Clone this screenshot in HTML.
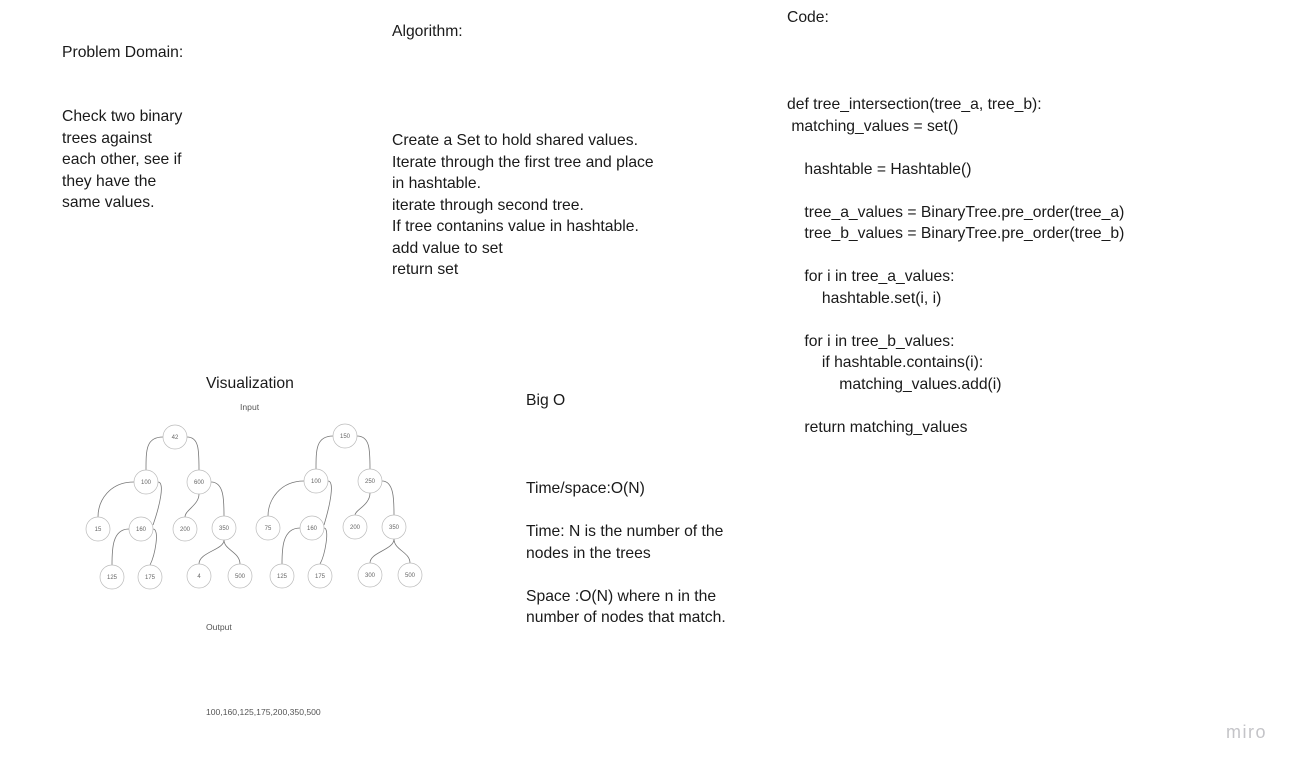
<html><head><style>
body{margin:0;width:1298px;height:770px;background:#fff;position:relative;overflow:hidden;font-family:"Liberation Sans",sans-serif;color:#1a1a1a}
.t{position:absolute;font-size:15.7px;line-height:21.5px;white-space:pre}
.s{position:absolute;font-size:8.6px;color:#555}
</style></head><body>
<div class="t" style="left:62px;top:42px">Problem Domain:</div>
<div class="t" style="left:62px;top:106px">Check two binary
trees against
each other, see if
they have the
same values.</div>
<div class="t" style="left:392px;top:21px">Algorithm:</div>
<div class="t" style="left:392px;top:130px">Create a Set to hold shared values.
Iterate through the first tree and place
in hashtable.
iterate through second tree.
If tree contanins value in hashtable.
add value to set
return set</div>
<div class="t" style="left:787px;top:7px">Code:</div>
<div class="t" style="left:787px;top:94px">def tree_intersection(tree_a, tree_b):
 matching_values = set()

    hashtable = Hashtable()

    tree_a_values = BinaryTree.pre_order(tree_a)
    tree_b_values = BinaryTree.pre_order(tree_b)

    for i in tree_a_values:
        hashtable.set(i, i)

    for i in tree_b_values:
        if hashtable.contains(i):
            matching_values.add(i)

    return matching_values</div>
<div class="t" style="left:206px;top:373px">Visualization</div>
<div class="s" style="left:240px;top:402px">Input</div>
<div class="s" style="left:206px;top:622px">Output</div>
<div class="s" style="left:206px;top:707px">100,160,125,175,200,350,500</div>
<div class="t" style="left:526px;top:390px">Big O</div>
<div class="t" style="left:526px;top:478px">Time/space:O(N)

Time: N is the number of the
nodes in the trees

Space :O(N) where n in the
number of nodes that match.</div>
<div style="position:absolute;left:1226px;top:722px;font-size:18px;color:#c4c4c8;letter-spacing:1.5px">miro</div>
<svg style="position:absolute;left:0;top:0" width="1298" height="770" font-family="Liberation Sans" font-size="6" fill="none" stroke="#888" stroke-width="0.8">
<g stroke="#777">
<path d="M163 437 C146 437 146 450 146 470"/><path d="M187 437 C199 437 199 450 199 470"/>
<path d="M134 482 C110 482 98 500 98 517"/><path d="M158 482 C165 482 160 505 153 525"/>
<path d="M199 494 C199 505 185 510 185 517"/><path d="M211 482 C224 482 224 500 224 516"/>
<path d="M129 529 C112 529 112 550 112 565"/><path d="M153 529 C160 529 155 555 150 565"/>
<path d="M224 540 C224 550 199 552 199 564"/><path d="M224 540 C224 550 240 552 240 564"/>
<path d="M333 436 C316 436 316 450 316 469"/><path d="M357 436 C370 436 370 450 370 469"/>
<path d="M304 481 C280 481 268 500 268 516"/><path d="M328 481 C335 481 330 505 324 525"/>
<path d="M370 493 C370 505 355 510 355 515"/><path d="M382 481 C394 481 394 500 394 515"/>
<path d="M300 528 C282 528 282 550 282 564"/><path d="M324 528 C330 528 325 555 320 564"/>
<path d="M394 539 C394 550 370 552 370 563"/><path d="M394 539 C394 550 410 552 410 563"/>
</g>
<g stroke="#bbb" stroke-width="0.7">
<circle cx="175" cy="437" r="12"/><circle cx="146" cy="482" r="12"/><circle cx="199" cy="482" r="12"/>
<circle cx="98" cy="529" r="12"/><circle cx="141" cy="529" r="12"/><circle cx="185" cy="529" r="12"/><circle cx="224" cy="528" r="12"/>
<circle cx="112" cy="577" r="12"/><circle cx="150" cy="577" r="12"/><circle cx="199" cy="576" r="12"/><circle cx="240" cy="576" r="12"/>
<circle cx="345" cy="436" r="12"/><circle cx="316" cy="481" r="12"/><circle cx="370" cy="481" r="12"/>
<circle cx="268" cy="528" r="12"/><circle cx="312" cy="528" r="12"/><circle cx="355" cy="527" r="12"/><circle cx="394" cy="527" r="12"/>
<circle cx="282" cy="576" r="12"/><circle cx="320" cy="576" r="12"/><circle cx="370" cy="575" r="12"/><circle cx="410" cy="575" r="12"/>
</g>
<g fill="#666" stroke="none" text-anchor="middle">
<text x="175" y="439">42</text><text x="146" y="484">100</text><text x="199" y="484">600</text>
<text x="98" y="531">15</text><text x="141" y="531">160</text><text x="185" y="531">200</text><text x="224" y="530">350</text>
<text x="112" y="579">125</text><text x="150" y="579">175</text><text x="199" y="578">4</text><text x="240" y="578">500</text>
<text x="345" y="438">150</text><text x="316" y="483">100</text><text x="370" y="483">250</text>
<text x="268" y="530">75</text><text x="312" y="530">160</text><text x="355" y="529">200</text><text x="394" y="529">350</text>
<text x="282" y="578">125</text><text x="320" y="578">175</text><text x="370" y="577">300</text><text x="410" y="577">500</text>
</g>
</svg>
</body></html>
